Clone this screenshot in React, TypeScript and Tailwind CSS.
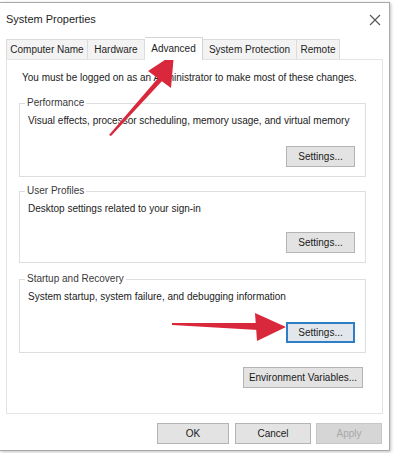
import React from "react";

const font = { fontFamily: '"Liberation Sans", Arial, sans-serif' };

function Btn({ children, w, focus, disabled }: { children: React.ReactNode; w: string; focus?: boolean; disabled?: boolean }) {
  const base = "h-[21px] flex items-center justify-center text-[10px] leading-none whitespace-nowrap";
  if (disabled)
    return <div className={`${base} ${w} bg-[#d6d6d6] border border-[#c6c6c6] text-[#a8a8a8]`}>{children}</div>;
  if (focus)
    return (
      <div className={`${base} ${w} bg-[#e2e7ec] border-2 border-[#2f7cc9] text-[#1a1a1a]`}>{children}</div>
    );
  return <div className={`${base} ${w} bg-[#e3e3e3] border border-[#b4b4b4] text-[#1a1a1a]`}>{children}</div>;
}

function Group({ title, desc, focus, h }: { title: string; desc: string; focus?: boolean; h: string }) {
  return (
    <div className={`relative border border-[#dedede] ${h} mx-[12px] w-[347px]`}>
      <div className="absolute -top-[8px] left-[5px] bg-white px-[2px] text-[10px] leading-[14px] text-[#3a3a3a] whitespace-nowrap">{title}</div>
      <div className="pt-[10px] pl-[8px] text-[10px] leading-[14px] text-[#222] whitespace-nowrap">{desc}</div>
      <div className="absolute right-[10px] bottom-[9px]">
        <Btn w="w-[69px]" focus={focus}>Settings...</Btn>
      </div>
    </div>
  );
}

const tab = "h-[20px] flex items-center justify-center border border-b-0 border-[#dcdcdc] bg-[#f3f3f3] whitespace-nowrap";

export default function App() {
  return (
    <div className="w-[394px] h-[453px] bg-white relative overflow-hidden" style={font}>
      <div className="absolute left-0 top-[2px] w-[390px] h-[449px] border-t border-r border-b border-[#a9a9a9] shadow-[1px_1px_3px_rgba(0,0,0,0.25)] bg-white flex flex-col">
        {/* title bar */}
        <div className="h-[33px] flex items-center justify-between pl-[6px] pr-[7px]">
          <span className="text-[11px] text-[#1e1e1e]">System Properties</span>
          <svg width="12" height="12" viewBox="0 0 12 12" className="mr-[1px] mt-[1px]">
            <path d="M1 1 L11 11 M11 1 L1 11" stroke="#555" strokeWidth="1.1" />
          </svg>
        </div>
        {/* tabs */}
        <div className="flex items-end pl-[6px] h-[23px] text-[10px] text-[#1e1e1e]">
          <div className={`${tab} w-[82px]`}>Computer Name</div>
          <div className={`${tab} border-l-0 w-[57px]`}>Hardware</div>
          <div className="h-[23px] flex items-start justify-center pt-[3px] border border-b-0 border-l-0 border-[#d4d4d4] bg-white w-[58px] relative z-10 mb-[-1px] whitespace-nowrap">Advanced</div>
          <div className={`${tab} border-l-0 w-[94px]`}>System Protection</div>
          <div className={`${tab} border-l-0 w-[43px]`}>Remote</div>
        </div>
        {/* panel */}
        <div className="ml-[6px] w-[377px] h-[355px] border border-[#e4e4e4] flex flex-col">
          <div className="pt-[11px] pl-[15px] text-[10px] leading-[14px] text-[#222] whitespace-nowrap">
            You must be logged on as an Administrator to make most of these changes.
          </div>
          <div className="mt-[18px]">
            <Group title="Performance" desc="Visual effects, processor scheduling, memory usage, and virtual memory" h="h-[74px]" />
          </div>
          <div className="mt-[14px]">
            <Group title="User Profiles" desc="Desktop settings related to your sign-in" h="h-[72px]" />
          </div>
          <div className="mt-[16px]">
            <Group title="Startup and Recovery" desc="System startup, system failure, and debugging information" h="h-[74px]" focus />
          </div>
          <div className="mt-[14px] flex justify-end pr-[19px]">
            <Btn w="w-[120px]">Environment Variables...</Btn>
          </div>
        </div>
        {/* footer */}
        <div className="flex justify-end pr-[7px] pt-[9px]">
          <Btn w="w-[72px]">OK</Btn>
          <div className="w-[6px]" />
          <Btn w="w-[76px]">Cancel</Btn>
          <div className="w-[5px]" />
          <Btn w="w-[66px]" disabled>Apply</Btn>
        </div>
      </div>
      {/* arrows */}
      <svg className="absolute left-0 top-0 pointer-events-none" width="394" height="453" viewBox="0 0 394 453">
        <g fill="#d9283b">
          <polygon points="109,135 111,136 163,80 159,77" />
          <polygon points="174,54 171,88 148,71" />
          <polygon points="172,323 172,325 258,330 258,323" />
          <polygon points="286,327 255,313 257,341" />
        </g>
      </svg>
    </div>
  );
}
